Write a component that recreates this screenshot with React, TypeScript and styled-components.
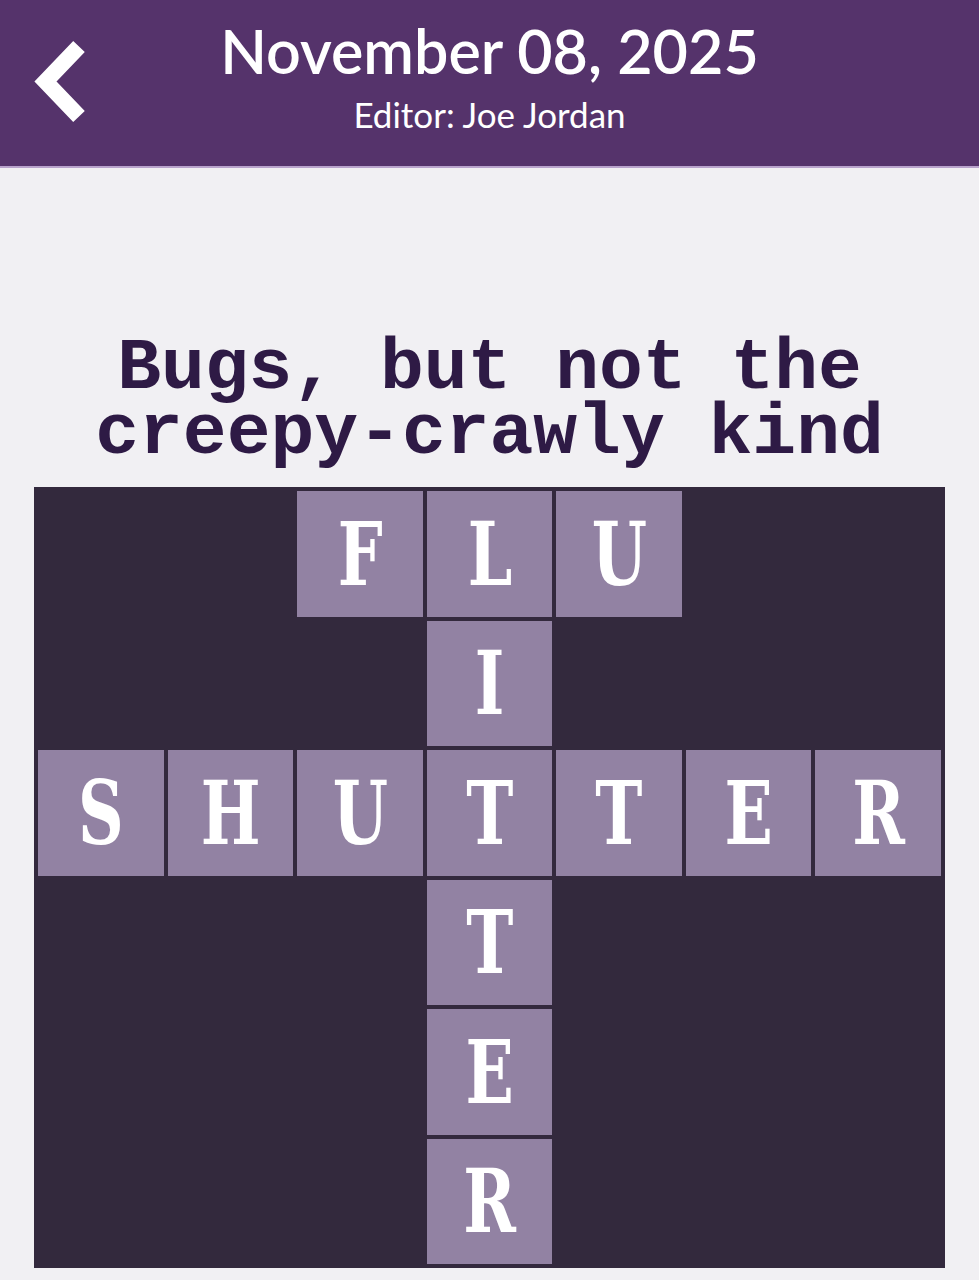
import styled, { createGlobalStyle } from 'styled-components';

const GlobalStyle = createGlobalStyle`
  html, body {
    margin: 0;
    padding: 0;
    background: #f1f0f3;
  }
`;

const ROWS = ['  FLU  ', '   I   ', 'SHUTTER', '   T   ', '   E   ', '   R   '];

function BackIcon() {
  return (
    <svg width="100" height="120" viewBox="0 0 100 120">
      <polyline
        points="59,26.5 25.5,61.5 59,96.5"
        fill="none"
        stroke="#fff"
        strokeWidth="16"
        strokeLinejoin="miter"
        strokeLinecap="butt"
      />
    </svg>
  );
}

export default function App() {
  return (
    <Page>
      <GlobalStyle />
      <Header>
        <BackButton aria-label="Back">
          <BackIcon />
        </BackButton>
        <Title>November 08, 2025</Title>
        <Editor>Editor: Joe Jordan</Editor>
      </Header>
      <Main>
        <Clue>
          <ClueLine>Bugs, but not the</ClueLine>
          <ClueLine>creepy-crawly kind</ClueLine>
        </Clue>
        <Board>
          {ROWS.flatMap((row, r) =>
            row.split('').map((ch, c) => (
              <Cell key={`${r}-${c}`} $filled={ch !== ' '}>
                {ch !== ' ' && <Letter>{ch}</Letter>}
              </Cell>
            ))
          )}
        </Board>
      </Main>
    </Page>
  );
}

const Page = styled.div`
  min-height: 1280px;
  background: #f1f0f3;
`;

const Header = styled.header`
  position: relative;
  height: 166px;
  background: #55336b;
  border-bottom: 2px solid #b9a3cc;
  display: flex;
  flex-direction: column;
  align-items: center;
  color: #fff;
  font-family: Lato, 'Open Sans', sans-serif;
`;

const BackButton = styled.button`
  position: absolute;
  left: 20px;
  top: 20px;
  padding: 0;
  border: 0;
  background: none;
  display: flex;
`;

const Title = styled.h1`
  margin: 15px 0 0;
  font-size: 61px;
  font-weight: 600;
  line-height: 72px;
`;

const Editor = styled.div`
  margin-top: 6px;
  font-size: 35px;
  line-height: 42px;
`;

const Main = styled.main`
  display: flex;
  flex-direction: column;
  align-items: center;
  padding: 168px 34px 12px;
`;

const Clue = styled.h2`
  margin: 0 0 21px;
  font-family: 'Liberation Mono', 'Courier New', monospace;
  font-weight: 700;
  font-size: 73px;
  color: #2e1a45;
  text-align: center;
`;

const ClueLine = styled.div`
  height: 65px;
  line-height: 65px;
`;

const Board = styled.div`
  width: 911px;
  box-sizing: border-box;
  padding: 4px;
  background: #33293d;
  display: grid;
  grid-template-columns: repeat(7, 1fr);
  grid-auto-rows: 125.5px;
  gap: 4px;
`;

const Cell = styled.div<{ $filled: boolean }>`
  display: flex;
  align-items: center;
  justify-content: center;
  background: ${(p) => (p.$filled ? '#9282a3' : 'transparent')};
`;

const Letter = styled.span`
  display: inline-block;
  color: #fff;
  font-family: 'DejaVu Serif', 'Liberation Serif', serif;
  font-weight: 700;
  font-size: 88px;
  line-height: 1;
  transform: scaleX(0.72);
`;
